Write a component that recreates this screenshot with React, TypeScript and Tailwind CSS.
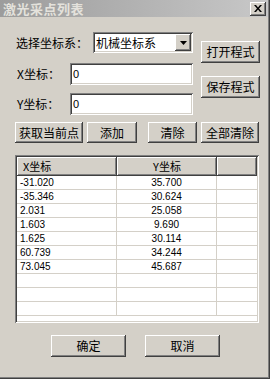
import React from 'react';

const cjk = { fontFamily: '"Noto Sans CJK SC", "Liberation Sans", sans-serif' };
const num = { fontFamily: '"Liberation Sans", "Noto Sans CJK SC", sans-serif' };

const raised =
  'bg-[#d4d0c8] shadow-[inset_-1px_-1px_0_#404040,inset_1px_1px_0_#ffffff,inset_-2px_-2px_0_#808080,inset_2px_2px_0_#d4d0c8]';
const sunken =
  'bg-white shadow-[inset_1px_1px_0_#808080,inset_-1px_-1px_0_#ffffff,inset_2px_2px_0_#404040,inset_-2px_-2px_0_#d4d0c8]';

const Btn: React.FC<{ label: string; w: string; h?: string }> = ({ label, w, h = 'h-[22px]' }) => (
  <div
    className={`${raised} ${w} ${h} flex items-center justify-center text-[12px] text-black leading-none`}
    style={cjk}
  >
    {label}
  </div>
);

const rows: [string, string][] = [
  ['-31.020', '35.700'],
  ['-35.346', '30.624'],
  ['2.031', '25.058'],
  ['1.603', '9.690'],
  ['1.625', '30.114'],
  ['60.739', '34.244'],
  ['73.045', '45.687'],
  ['', ''],
  ['', ''],
  ['', ''],
];

const App: React.FC = () => {
  return (
    <div className="w-[270px] h-[379px] bg-[#d4d0c8] overflow-hidden shadow-[inset_-1px_-1px_0_#404040,inset_-2px_-2px_0_#808080]">
      {/* title bar */}
      <div className="h-[17px] w-[268px] flex items-center justify-between bg-gradient-to-r from-[#9c9c9c] to-[#c8c8c8] pl-[3px] pr-[2px]">
        <span className="text-[13px] font-bold text-[#e4e2dc] leading-none tracking-[0.5px]" style={cjk}>
          激光采点列表
        </span>
        <div className={`${raised} w-[16px] h-[14px] flex items-center justify-center`}>
          <svg width="8" height="7" viewBox="0 0 8 7">
            <path d="M0 0h2l2 2.5L6 0h2L5 3.5 8 7H6L4 4.5 2 7H0l3-3.5z" fill="#000" />
          </svg>
        </div>
      </div>

      {/* top form */}
      <div className="flex pl-[16px] pt-[15px]">
        <div className="flex flex-col w-[177px]">
          <div className="flex items-center h-[21px]">
            <span className="w-[77px] text-[12px] text-black leading-none" style={cjk}>
              选择坐标系：
            </span>
            <div className={`${sunken} w-[100px] h-[21px] flex items-center pl-[3px] pr-[2px]`}>
              <span className="flex-1 text-[12px] text-black leading-none" style={cjk}>
                机械坐标系
              </span>
              <div className={`${raised} w-[16px] h-[17px] flex items-center justify-center`}>
                <svg width="7" height="4" viewBox="0 0 7 4">
                  <path d="M0 0h7L3.5 4z" fill="#000" />
                </svg>
              </div>
            </div>
          </div>
          <div className="flex items-center h-[22px] mt-[10px]">
            <span className="w-[54px] pl-[1px] text-[12px] text-black leading-none" style={cjk}>
              X坐标：
            </span>
            <div className={`${sunken} w-[123px] h-[22px] flex items-center pl-[3px]`}>
              <span className="text-[11px] text-black leading-none" style={num}>0</span>
            </div>
          </div>
          <div className="flex items-center h-[22px] mt-[8px]">
            <span className="w-[54px] pl-[1px] text-[12px] text-black leading-none" style={cjk}>
              Y坐标：
            </span>
            <div className={`${sunken} w-[123px] h-[22px] flex items-center pl-[3px]`}>
              <span className="text-[11px] text-black leading-none" style={num}>0</span>
            </div>
          </div>
        </div>
        <div className="flex flex-col ml-[8px] pt-[9px] gap-[13px]">
          <Btn label="打开程式" w="w-[59px]" />
          <Btn label="保存程式" w="w-[59px]" />
        </div>
      </div>

      {/* action buttons */}
      <div className="flex pl-[15px] mt-[7px]">
        <Btn label="获取当前点" w="w-[68px]" h="h-[21px]" />
        <div className="ml-[4px]">
          <Btn label="添加" w="w-[50px]" h="h-[21px]" />
        </div>
        <div className="ml-[11px]">
          <Btn label="清除" w="w-[49px]" h="h-[21px]" />
        </div>
        <div className="ml-[4px]">
          <Btn label="全部清除" w="w-[58px]" h="h-[21px]" />
        </div>
      </div>

      {/* list */}
      <div className={`${sunken} ml-[15px] mt-[12px] w-[244px] h-[168px] p-[2px] overflow-hidden`}>
        <div className="flex h-[19px]">
          <div className={`${raised} w-[100px] flex items-center pl-[6px] text-[11px] text-black leading-none`} style={cjk}>
            X坐标
          </div>
          <div className={`${raised} w-[100px] flex items-center justify-center text-[11px] text-black leading-none`} style={cjk}>
            Y坐标
          </div>
          <div className={`${raised} flex-1`} />
        </div>
        {rows.map(([x, y], i) => (
          <div key={i} className="flex h-[14px] border-b border-[#d4d0c8] text-[10px] text-black leading-none" style={num}>
            <div className="w-[100px] flex items-center pl-[3px] border-r border-[#d4d0c8]">{x}</div>
            <div className="w-[100px] flex items-center justify-center border-r border-[#d4d0c8]">{y}</div>
            <div className="flex-1" />
          </div>
        ))}
      </div>

      {/* bottom buttons */}
      <div className="flex pl-[51px] mt-[12px] gap-[19px]">
        <Btn label="确定" w="w-[75px]" />
        <Btn label="取消" w="w-[75px]" />
      </div>
    </div>
  );
};

export default App;
